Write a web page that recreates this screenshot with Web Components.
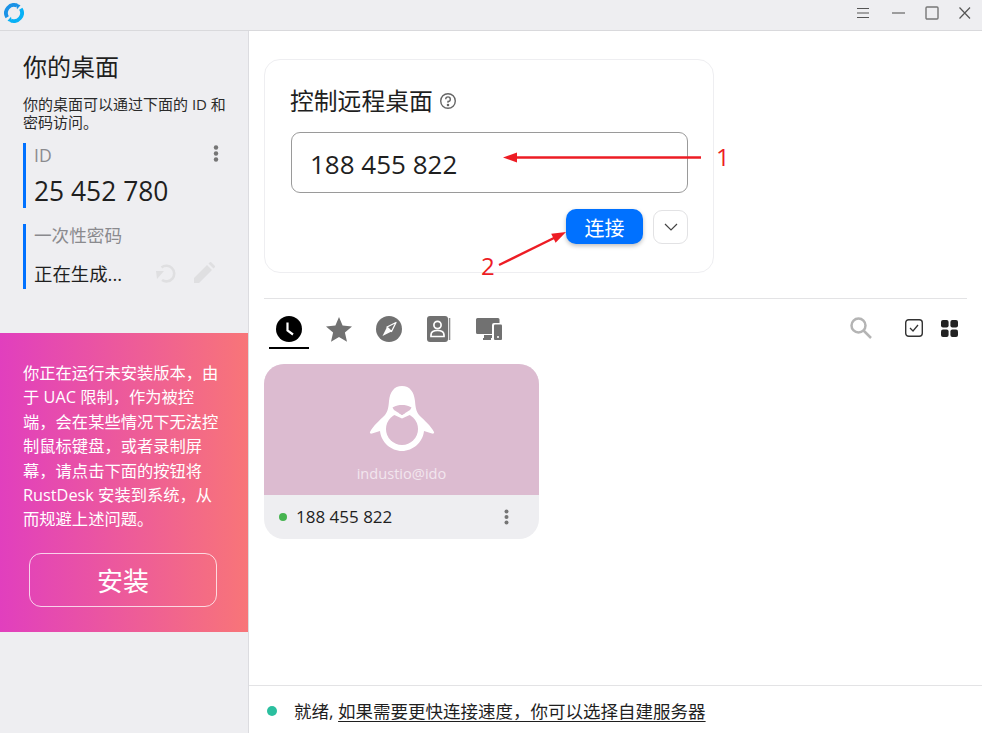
<!DOCTYPE html>
<html><head><meta charset="utf-8"><style>
html,body{margin:0;padding:0;width:982px;height:733px;overflow:hidden;background:#fff;font-family:"Open Sans","Noto Sans CJK SC",sans-serif;color:#1f1f1f}
</style></head><body>
<rd-app></rd-app>
<script>
function def(name, css, html){
  customElements.define(name, class extends HTMLElement{
    constructor(){super();const s=this.attachShadow({mode:'open'});s.innerHTML='<style>'+css+'</style>'+html;}
  });
}
const FONT='"Open Sans","Noto Sans CJK SC",sans-serif';
def('rd-titlebar',`:host{display:flex;height:31px;box-sizing:border-box;background:#eeeef1;border-bottom:1px solid #d9d9dc;align-items:flex-start;justify-content:space-between}
.logo{margin-left:4px;margin-top:3px;width:20px;height:20px;display:block}
.btns{display:flex;align-items:center;gap:16px;padding-right:9px;margin-top:6px}
svg{display:block}`,
`<svg class="logo" viewBox="0 0 20 20" fill="none"><path d="M3.200 14.200A8 8 0 0 1 13 2.600" stroke="#1a92e6" stroke-width="3.800"/><path d="M16.800 5.800A8 8 0 0 1 7 17.400" stroke="#08b1f6" stroke-width="3.800"/><path d="M12 .4l4.500 1.900-3.500 3.900z" fill="#1a92e6"/><path d="M8 19.600l-4.500-1.900 3.500-3.900z" fill="#08b1f6"/></svg>
<div class="btns">
<svg width="18" height="14" viewBox="0 0 18 14" stroke="#555" stroke-width="1.2"><path d="M2 2.500h12M2 7h12M2 11.500h12"/></svg>
<svg width="18" height="14" viewBox="0 0 18 14" stroke="#666" stroke-width="1.2"><path d="M3 7h13"/></svg>
<svg width="18" height="14" viewBox="0 0 18 14" fill="none" stroke="#777" stroke-width="1.4"><rect x="3" y="1" width="12" height="12" rx="1"/></svg>
<svg width="16" height="14" viewBox="0 0 16 14" stroke="#555" stroke-width="1.2"><path d="M2.500 1.500l10.500 11M13 1.500L2.500 12.500"/></svg>
</div>`);

def('rd-id-board',`:host{display:block;padding:21px 24px 0 23px;height:302px;box-sizing:border-box}
h1{font:400 24px/30px ${FONT};margin:0;color:#1f1f1f}
p{font:400 15px/18px ${FONT};margin:13px 0 0;color:#2a2a2a;white-space:nowrap}
.blk{border-left:3px solid #0071ff;padding-left:8px;position:relative;height:65px;box-sizing:border-box}
.id{margin-top:12px;padding-top:1px}
.pw{margin-top:16px}
.lab{font:400 17.600px/22px ${FONT};color:#8a8a8e}
.val{font:400 26.400px/36px ${FONT};color:#1f1f1f;margin-top:7px}
.row{display:flex;align-items:center;margin-top:14px;height:28px}
.s{flex:1;font:400 18.400px/28px ${FONT};color:#1f1f1f}
.dots{position:absolute;right:5px;top:2px}
.acts{display:flex;gap:18px;margin:-3px 9px 0 0;align-items:center}`,
`<h1>你的桌面</h1>
<p>你的桌面可以通过下面的 ID 和<br>密码访问。</p>
<div class="blk id"><div class="lab">ID</div><svg class="dots" width="6" height="17" viewBox="0 0 6 17" fill="#757575"><circle cx="3" cy="2.500" r="2.200"/><circle cx="3" cy="8.500" r="2.200"/><circle cx="3" cy="14.500" r="2.200"/></svg><div class="val">25 452 780</div></div>
<div class="blk pw"><div class="lab">一次性密码</div><div class="row"><div class="s">正在生成...</div><div class="acts">
<svg width="20" height="20" viewBox="0 0 20 20" fill="none" stroke="#dfdfe1" stroke-width="2.600"><path d="M5.500 4.500A7.800 7.800 0 1 1 6 17"/><path d="M0 8h8L1 16z" fill="#dfdfe1" stroke="none"/></svg>
<svg width="21" height="21" viewBox="0 0 21 21" fill="#dfdfe1"><path d="M0 21v-5L13 3l5 5L5 21zM14.500 1.500l1-1a1.400 1.400 0 0 1 2 0l3 3a1.400 1.400 0 0 1 0 2l-1 1z"/></svg>
</div></div></div>`);

def('rd-install-card',`:host{display:block;height:299px;box-sizing:border-box;background:linear-gradient(90deg,#e13fbe,#f87578);padding:28px 23px 0;color:#fff}
p{margin:0;font:400 16.300px/24.400px ${FONT};width:202px;color:#fff;white-space:nowrap}
button{display:block;margin:21px 0 0 6px;width:188px;height:54px;box-sizing:border-box;border:1.500px solid rgba(255,255,255,.75);border-radius:12px;background:transparent;color:#fff;font:400 26px/1 ${FONT};padding:2px 0 0}`,
`<p>你正在运行未安装版本，由<br>于 UAC 限制，作为被控<br>端，会在某些情况下无法控<br>制鼠标键盘，或者录制屏<br>幕，请点击下面的按钮将<br>RustDesk 安装到系统，从<br>而规避上述问题。</p><button>安装</button>`);

def('rd-sidebar',`:host{display:block;width:249px;flex:none;box-sizing:border-box;background:#eeeef1;border-right:1px solid #dcdce0}`,`<slot></slot>`);

def('rd-connect',`:host{display:block;width:450px;height:214px;box-sizing:border-box;border:1px solid #eeeef1;border-radius:16px;background:#fff;padding:23px 25px 0 25px}
.t{display:flex;align-items:center;gap:6px;font:400 23.800px/36px ${FONT};color:#1f1f1f}
.box{margin:13px 0 0 1px;width:397px;height:61px;box-sizing:border-box;border:1px solid #9a9a9a;border-radius:9px;padding-left:18px;font:400 26px/62px ${FONT};color:#1f1f1f}
.acts{display:flex;justify-content:flex-end;align-items:flex-end;gap:10px;margin:16px 0 0 1px;width:397px}
.go{width:77px;height:35px;background:#0071ff;color:#fff;border:0;border-radius:10px;box-shadow:0 2px 4px rgba(0,0,0,.25);font:400 20px/35px ${FONT};padding:2px 0 0}
.more{width:35px;height:34px;box-sizing:border-box;border:1px solid #e2e2e4;border-radius:9px;display:flex;align-items:center;justify-content:center;background:#fff}`,
`<div class="t">控制远程桌面<svg width="18" height="18" viewBox="0 0 18 18" fill="none" stroke="#666" stroke-width="1.400"><circle cx="9" cy="9" r="7.300"/><path d="M6.700 7.200A2.300 2.300 0 1 1 9 9.500v1.300"/><circle cx="9" cy="13" r=".6" fill="#666"/></svg></div>
<div class="box">188 455 822</div>
<div class="acts"><button class="go">连接</button><div class="more"><svg width="16" height="10" viewBox="0 0 16 10" fill="none" stroke="#444" stroke-width="1.200"><path d="M2 2l6 6 6-6"/></svg></div></div>`);

def('rd-tabs',`:host{display:flex;align-items:flex-start;justify-content:space-between;margin-top:25px;border-top:1px solid #e3e3e5;height:66px;box-sizing:border-box}
.l{display:flex;padding-left:5px}
.tab{width:50px;height:50px;box-sizing:border-box;display:flex;align-items:center;justify-content:center;padding-top:10px}
.tab:first-child{width:40px;position:relative;margin-right:5px}
.tab:first-child::after{content:"";position:absolute;left:0;right:0;top:48px;height:2px;background:#000}
.r{display:flex;align-items:center;padding-top:18px;padding-right:9px}
.s{margin-right:33px}.c{margin-right:18px}
svg{display:block}`,
`<div class="l">
<div class="tab"><svg width="26" height="26" viewBox="0 0 26 26"><circle cx="13" cy="13" r="13"/><path d="M11.500 6.500v8l5.500 4" stroke="#fff" stroke-width="2.200" fill="none"/></svg></div>
<div class="tab"><svg width="26" height="25" viewBox="0 0 26 25" fill="#717171"><path d="M13 0l3.600 8.600 9.400.8-7.100 6.100 2.100 9.200L13 19.900l-8 4.800 2.100-9.200L0 9.400l9.400-.8z"/></svg></div>
<div class="tab"><svg width="26" height="26" viewBox="0 0 26 26"><circle cx="13" cy="13" r="13" fill="#717171"/><path d="M20 6.500L15.500 15.500 11 11z" fill="none" stroke="#fff" stroke-width="1.300" stroke-linejoin="round"/><path d="M6.500 20L11 11l4.500 4.500z" fill="#fff"/></svg></div>
<div class="tab"><svg width="24" height="26" viewBox="0 0 24 26"><rect x="0" y="0" width="21" height="26" rx="3" fill="#717171"/><rect x="21.800" y="2" width="1.500" height="22" fill="#8c8c8c"/><circle cx="10.500" cy="9" r="3.600" fill="none" stroke="#fff" stroke-width="1.700"/><path d="M4 20.500v-1.500c0-3 3-4.500 6.500-4.500s6.500 1.500 6.500 4.500v1.500z" fill="none" stroke="#fff" stroke-width="1.700"/></svg></div>
<div class="tab"><svg width="26" height="22" viewBox="0 0 26 22" fill="#717171"><path d="M1.500 0H22a1.500 1.500 0 0 1 1.500 1.500V5H18a2 2 0 0 0-2 2v9H1.500A1.500 1.500 0 0 1 0 14.500v-13A1.500 1.500 0 0 1 1.500 0zM8 17h8v3h-1v2H7v-2h1z"/><rect x="18" y="6.500" width="8" height="15.500" rx="1"/><circle cx="22" cy="19" r="1" fill="#fff"/></svg></div>
</div>
<div class="r">
<svg class="s" width="22" height="22" viewBox="0 0 22 22" fill="none" stroke="#b4b4b4" stroke-width="2.500"><circle cx="8.500" cy="8.500" r="7"/><path d="M13.500 13.500l7.500 7.500"/></svg>
<svg class="c" width="18" height="18" viewBox="0 0 18 18" fill="none" stroke="#333"><rect x=".7" y=".7" width="16.600" height="16.600" rx="3" stroke-width="1.400"/><path d="M5 9l3 3 5-6" stroke-width="1.300"/></svg>
<svg width="17" height="17" viewBox="0 0 17 17" fill="#222"><rect width="7.600" height="7.600" rx="2"/><rect x="9.400" width="7.600" height="7.600" rx="2"/><rect y="9.400" width="7.600" height="7.600" rx="2"/><rect x="9.400" y="9.400" width="7.600" height="7.600" rx="2"/></svg>
</div>`);

def('rd-peer',`:host{display:block;width:275px;height:175px;border-radius:20px;overflow:hidden;background:#eeeef1}
.top{height:131px;background:#dcbbd0;position:relative;text-align:center}
.top svg{display:block;position:absolute;left:101px;top:18px}
.u{position:absolute;left:0;right:0;top:99px;font:400 14.600px/20px ${FONT};color:#f2e6ee}
.bot{height:44px;display:flex;align-items:center;padding-left:15px;font:400 17px/24px ${FONT};color:#1f1f1f}
.d{width:8px;height:8px;border-radius:50%;background:#46b450;margin-right:9px}
.n{flex:1}
.m{margin-right:30px}`,
`<div class="top"><svg width="74" height="74" viewBox="0 0 74 74"><path fill="#fff" d="M37 4C45 4 49 10 50 19C50.500 25 51 29 54 33C60 39 66 44 69 50C69.500 51 68.500 52 67 51.500L59 49C58 60 48 69 37 69C26 69 16 60 15 49L7 51.500C5.500 52 4.500 51 5 50C8 44 14 39 20 33C23 29 23.500 25 24 19C25 10 29 4 37 4Z"/><circle cx="37" cy="47" r="16" fill="#dcbbd0"/><path fill="#fff" d="M25 26L37 33L49 26V31L37 36.500L25 31Z"/><path fill="#dcbbd0" d="M27.500 25.500C31 23.500 34 23 37 23C40 23 43 23.500 46.500 25.500L45 28L37 33L29 28Z"/></svg><div class="u">industio@ido</div></div>
<div class="bot"><span class="d"></span><span class="n">188 455 822</span><svg class="m" width="5" height="16" viewBox="0 0 5 16" fill="#757575"><circle cx="2.500" cy="2.500" r="2"/><circle cx="2.500" cy="8" r="2"/><circle cx="2.500" cy="13.500" r="2"/></svg></div>`);

def('rd-status',`:host{display:flex;align-items:center;height:48px;box-sizing:border-box;border-top:1px solid #e3e3e5;padding:2px 0 0 18px;font:400 17.500px/22px ${FONT};color:#1f1f1f;background:#fff}
.d{width:10px;height:10px;border-radius:50%;background:#2bbf9f;margin-right:17px}
u{text-underline-offset:3px}`,
`<span class="d"></span><span>就绪, <u>如果需要更快连接速度，你可以选择自建服务器</u></span>`);

def('rd-main',`:host{flex:1;display:flex;flex-direction:column;min-width:0;background:#fff}
.c{flex:1;padding:28px 15px 0}
.ann{position:absolute;left:0;top:0;pointer-events:none}
.n{position:absolute;font:400 24px/32px ${FONT};color:#ed1c24}
.n1{left:716px;top:141px}.n2{left:481px;top:250px}`,
`<div class="c"><rd-connect></rd-connect><rd-tabs></rd-tabs><rd-peer></rd-peer></div><rd-status></rd-status>
<svg class="ann" width="982" height="300" fill="none"><path d="M701 157.500H512" stroke="#ed1c24" stroke-width="2.400"/><path d="M503 157.500l14-5v10z" fill="#ed1c24"/><path d="M499 265l57-28" stroke="#ed1c24" stroke-width="2.400"/><path d="M566 232l-14.800 1.700 4.400 9z" fill="#ed1c24"/></svg>
<span class="n n1">1</span><span class="n n2">2</span>`);

def('rd-app',`:host{display:flex;flex-direction:column;width:982px;height:733px}
.b{flex:1;display:flex;min-height:0}`,
`<rd-titlebar></rd-titlebar><div class="b"><rd-sidebar><rd-id-board></rd-id-board><rd-install-card></rd-install-card></rd-sidebar><rd-main></rd-main></div>`);
</script>
</body></html>
